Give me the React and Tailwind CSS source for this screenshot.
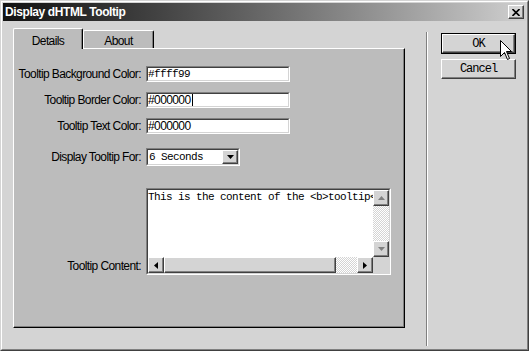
import React from "react";

function Raised({ className = "", children }) {
  return (
    <div
      className={`border border-t-white border-l-white border-r-[#404040] border-b-[#404040] shadow-[inset_-1px_-1px_0_#808080] bg-[#d4d4d4] ${className}`}
    >
      {children}
    </div>
  );
}

function Sunken({ className = "", innerClass = "", children }) {
  return (
    <div
      className={`border border-t-[#808080] border-l-[#808080] border-b-white border-r-white ${className}`}
    >
      <div
        className={`h-full w-full border border-t-[#404040] border-l-[#404040] border-b-[#d4d4d4] border-r-[#d4d4d4] ${innerClass}`}
      >
        {children}
      </div>
    </div>
  );
}

function Tri({ dir, color = "#000000" }) {
  const paths = {
    up: "M3.5 0 L7 4 L0 4 Z",
    down: "M0 0 L7 0 L3.5 4 Z",
    left: "M4 0 L4 7 L0 3.5 Z",
    right: "M0 0 L4 3.5 L0 7 Z",
  };
  const vertical = dir === "up" || dir === "down";
  return (
    <svg
      width={vertical ? 7 : 4}
      height={vertical ? 4 : 7}
      viewBox={vertical ? "0 0 7 4" : "0 0 4 7"}
    >
      <path d={paths[dir]} fill={color} />
    </svg>
  );
}

const label =
  "w-[129px] mr-[3px] pr-[2px] text-right text-[12px] leading-[16px] tracking-[-0.6px] text-black font-['Liberation_Sans',Arial,sans-serif] whitespace-nowrap";

export default function App() {
  return (
    <div className="relative w-[529px] h-[351px] overflow-hidden bg-[#d4d4d4] border border-t-[#d4d4d4] border-l-[#d4d4d4] border-r-[#404040] border-b-[#404040]">
      <div className="flex h-full w-full flex-col border border-t-white border-l-white border-r-[#808080] border-b-[#808080] p-px">
        {/* Title bar */}
        <div className="flex h-[18px] shrink-0 items-center bg-linear-to-r from-[#121212] to-[#d0d0d0] pl-[2px] pr-[2px]">
          <span className="flex-1 text-[12px] font-bold tracking-[-0.4px] text-white font-['Liberation_Sans',Arial,sans-serif]">
            Display dHTML Tooltip
          </span>
          <Raised className="flex h-[14px] w-[16px] items-center justify-center">
            <svg width="8" height="7" viewBox="0 0 8 7">
              <path
                d="M0.5 0 L7.5 7 M7.5 0 L0.5 7"
                stroke="#000"
                strokeWidth="1.6"
              />
            </svg>
          </Raised>
        </div>

        {/* Body */}
        <div className="flex flex-1">
          {/* Left: tabs + panel */}
          <div className="pl-[10px] pt-[7px]">
            <div className="flex h-[20px] items-end">
              <div className="relative z-10 -mb-px flex h-[21px] w-[70px] items-center justify-center rounded-t-[2px] border-t border-l border-r border-t-white border-l-white border-r-[#000000] bg-[#bcbcbc] pt-[4px] shadow-[inset_-1px_0_0_#808080] text-[12px] tracking-[-0.6px] text-black font-['Liberation_Sans',Arial,sans-serif]">
                Details
              </div>
              <div className="flex h-[18px] w-[71px] items-center justify-center rounded-t-[2px] border-t border-l border-r border-t-white border-l-white border-r-[#000000] bg-[#bcbcbc] pt-[3px] shadow-[inset_-1px_0_0_#808080] text-[12px] tracking-[-0.6px] text-black font-['Liberation_Sans',Arial,sans-serif]">
                About
              </div>
            </div>
            <div className="flex h-[280px] w-[392px] flex-col border border-t-white border-l-white border-r-black border-b-black bg-[#bcbcbc] pt-[17px] shadow-[inset_-1px_-1px_0_#808080]">
              <div className="flex items-center">
                <div className={label}>Tooltip Background Color:</div>
                <Sunken
                  className="h-[16px] w-[144px]"
                  innerClass="bg-white flex items-center text-[11px] tracking-[-0.6px] leading-[12px] text-black font-['Liberation_Mono',monospace]"
                >
                  #ffff99
                </Sunken>
              </div>
              <div className="mt-[10px] flex items-center">
                <div className={label}>Tooltip Border Color:</div>
                <Sunken
                  className="h-[16px] w-[144px]"
                  innerClass="bg-white flex items-center text-[12px] tracking-[-0.6px] leading-[12px] text-black font-['Liberation_Sans',Arial,sans-serif]"
                >
                  #000000
                  <span className="ml-[1px] h-[12px] w-px bg-black" />
                </Sunken>
              </div>
              <div className="mt-[10px] flex items-center">
                <div className={label}>Tooltip Text Color:</div>
                <Sunken
                  className="h-[16px] w-[144px]"
                  innerClass="bg-white flex items-center text-[12px] tracking-[-0.6px] leading-[12px] text-black font-['Liberation_Sans',Arial,sans-serif]"
                >
                  #000000
                </Sunken>
              </div>
              <div className="mt-[14px] flex items-center">
                <div className={label}>Display Tooltip For:</div>
                <Sunken className="h-[18px] w-[94px]" innerClass="bg-white flex">
                  <span className="flex flex-1 items-center pl-[1px] text-[11px] tracking-[-0.6px] leading-[12px] text-black font-['Liberation_Mono',monospace]">
                    6 Seconds
                  </span>
                  <Raised className="flex h-full w-[16px] items-center justify-center">
                    <Tri dir="down" />
                  </Raised>
                </Sunken>
              </div>
              <div className="mt-[22px] flex items-end">
                <div className={`${label} mb-[1px]`}>Tooltip Content:</div>
                <Sunken
                  className="h-[87px] w-[245px]"
                  innerClass="grid grid-cols-[225px_16px] grid-rows-[67px_16px]"
                >
                  <div className="overflow-hidden whitespace-nowrap bg-white pt-[1px] text-[11px] leading-[12px] tracking-[-0.6px] text-black font-['Liberation_Mono',monospace]">
                    This is the content of the &lt;b&gt;tooltip&lt;/b&gt;
                  </div>
                  <div className="flex flex-col">
                    <Raised className="flex h-[16px] w-[16px] items-center justify-center">
                      <Tri dir="up" color="#808080" />
                    </Raised>
                    <div className="flex-1 bg-[repeating-conic-gradient(#ffffff_0_25%,#d4d4d4_0_50%)] bg-[length:2px_2px]" />
                    <Raised className="flex h-[16px] w-[16px] items-center justify-center">
                      <Tri dir="down" color="#808080" />
                    </Raised>
                  </div>
                  <div className="flex">
                    <Raised className="flex h-[16px] w-[16px] items-center justify-center">
                      <Tri dir="left" />
                    </Raised>
                    <Raised className="h-[16px] w-[172px]" />
                    <div className="flex-1 bg-[repeating-conic-gradient(#ffffff_0_25%,#d4d4d4_0_50%)] bg-[length:2px_2px]" />
                    <Raised className="flex h-[16px] w-[16px] items-center justify-center">
                      <Tri dir="right" />
                    </Raised>
                  </div>
                  <div className="bg-[#d4d4d4]" />
                </Sunken>
              </div>
            </div>
          </div>

          {/* Separator */}
          <div className="mb-[2px] ml-[21px] mt-[11px] w-[2px] border-l border-r border-l-[#808080] border-r-white" />

          {/* Buttons */}
          <div className="ml-[13px] flex flex-col gap-[5px] pt-[12px]">
            <div className="h-[21px] w-[75px] border border-black">
              <Raised className="flex h-full w-full items-center justify-center text-[12px] tracking-[-1px] text-black font-['Liberation_Mono',monospace]">
                OK
              </Raised>
            </div>
            <Raised className="flex h-[20px] w-[75px] items-center justify-center text-[12px] tracking-[-1px] text-black font-['Liberation_Mono',monospace]">
              Cancel
            </Raised>
          </div>
        </div>
      </div>

      {/* Mouse cursor */}
      <svg
        className="absolute left-[499px] top-[39px]"
        width="14"
        height="22"
        viewBox="0 0 14 22"
      >
        <path
          d="M0.5 0.5 L0.5 16.5 L4.5 12.5 L7.5 19.5 L9.5 18.5 L6.5 11.5 L11.5 11.5 Z"
          fill="#ffffff"
          stroke="#000000"
          strokeWidth="1"
        />
      </svg>
    </div>
  );
}
